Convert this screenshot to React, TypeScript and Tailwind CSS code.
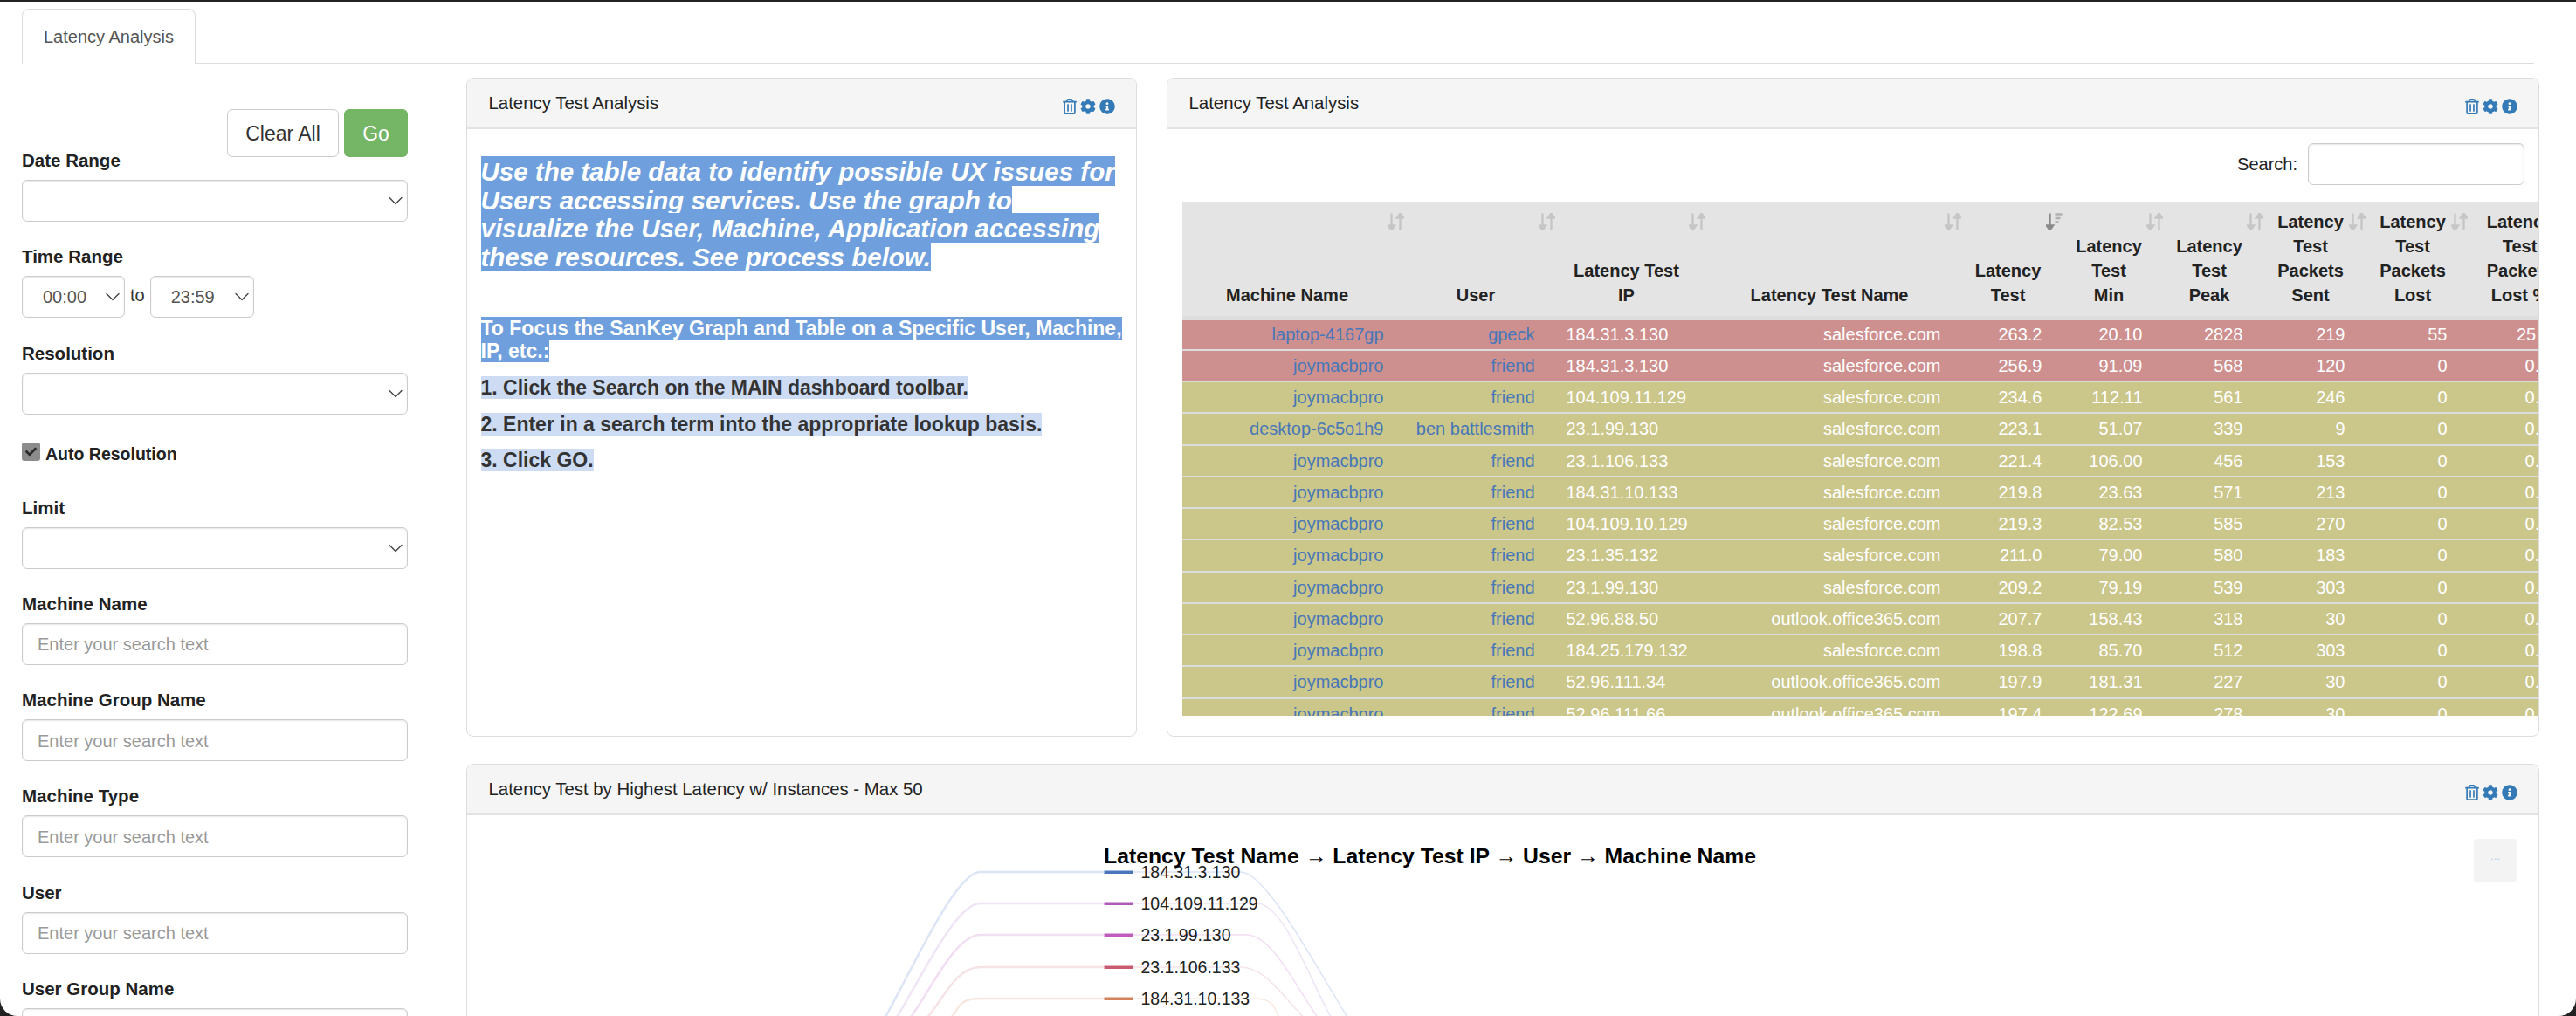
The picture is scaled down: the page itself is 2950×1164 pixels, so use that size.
import React from 'react'
import { ChevronDown } from 'lucide-react'
import { FaCheck, FaCog, FaInfoCircle, FaRegTrashAlt } from 'react-icons/fa'

const FONT = "font-['Liberation_Sans',Arial,sans-serif]"

type Row = {
  machine: string
  user: string
  ip: string
  name: string
  latency: string
  min: string
  peak: string
  sent: string
  lost: string
  lostPct: string
  red?: boolean
}

const SF = 'salesforce.com'
const OL = 'outlook.office365.com'
const JM = 'joymacbpro'

const ROWS: Row[] = [
  { machine: 'laptop-4167gp', user: 'gpeck', ip: '184.31.3.130', name: SF, latency: '263.2', min: '20.10', peak: '2828', sent: '219', lost: '55', lostPct: '25.11', red: true },
  { machine: JM, user: 'friend', ip: '184.31.3.130', name: SF, latency: '256.9', min: '91.09', peak: '568', sent: '120', lost: '0', lostPct: '0.00', red: true },
  { machine: JM, user: 'friend', ip: '104.109.11.129', name: SF, latency: '234.6', min: '112.11', peak: '561', sent: '246', lost: '0', lostPct: '0.00' },
  { machine: 'desktop-6c5o1h9', user: 'ben battlesmith', ip: '23.1.99.130', name: SF, latency: '223.1', min: '51.07', peak: '339', sent: '9', lost: '0', lostPct: '0.00' },
  { machine: JM, user: 'friend', ip: '23.1.106.133', name: SF, latency: '221.4', min: '106.00', peak: '456', sent: '153', lost: '0', lostPct: '0.00' },
  { machine: JM, user: 'friend', ip: '184.31.10.133', name: SF, latency: '219.8', min: '23.63', peak: '571', sent: '213', lost: '0', lostPct: '0.00' },
  { machine: JM, user: 'friend', ip: '104.109.10.129', name: SF, latency: '219.3', min: '82.53', peak: '585', sent: '270', lost: '0', lostPct: '0.00' },
  { machine: JM, user: 'friend', ip: '23.1.35.132', name: SF, latency: '211.0', min: '79.00', peak: '580', sent: '183', lost: '0', lostPct: '0.00' },
  { machine: JM, user: 'friend', ip: '23.1.99.130', name: SF, latency: '209.2', min: '79.19', peak: '539', sent: '303', lost: '0', lostPct: '0.00' },
  { machine: JM, user: 'friend', ip: '52.96.88.50', name: OL, latency: '207.7', min: '158.43', peak: '318', sent: '30', lost: '0', lostPct: '0.00' },
  { machine: JM, user: 'friend', ip: '184.25.179.132', name: SF, latency: '198.8', min: '85.70', peak: '512', sent: '303', lost: '0', lostPct: '0.00' },
  { machine: JM, user: 'friend', ip: '52.96.111.34', name: OL, latency: '197.9', min: '181.31', peak: '227', sent: '30', lost: '0', lostPct: '0.00' },
  { machine: JM, user: 'friend', ip: '52.96.111.66', name: OL, latency: '197.4', min: '122.69', peak: '278', sent: '30', lost: '0', lostPct: '0.00' },
]

const COLUMNS = [
  { label: 'Machine Name', width: 'w-[259px]' },
  { label: 'User', width: 'w-[173px]' },
  { label: 'Latency Test IP', width: 'w-[172px]' },
  { label: 'Latency Test Name', width: 'w-[293px]' },
  { label: 'Latency Test', width: 'w-[116px]', sorted: true },
  { label: 'Latency Test Min', width: 'w-[115px]' },
  { label: 'Latency Test Peak', width: 'w-[115px]' },
  { label: 'Latency Test Packets Sent', width: 'w-[117px]' },
  { label: 'Latency Test Packets Lost', width: 'w-[117px]' },
  { label: 'Latency Test Packets Lost %', width: 'w-[128px]' },
]

const LINKS = [
  { ip: '184.31.3.130', y: 997, left: 1014, right: 1544, bar: '#4a75bd', link: '#dce4f6', rightStart: 1421 },
  { ip: '104.109.11.129', y: 1033, left: 1027, right: 1525, bar: '#ae5cb8', link: '#efe4f5', rightStart: 1440 },
  { ip: '23.1.99.130', y: 1069, left: 1043, right: 1510, bar: '#c05cbd', link: '#f2def3', rightStart: 1428 },
  { ip: '23.1.106.133', y: 1106, left: 1062, right: 1494, bar: '#c95b70', link: '#f6e3e6', rightStart: 1421 },
  { ip: '184.31.10.133', y: 1142, left: 1089, right: 1467, bar: '#d1825a', link: '#f7e8e0', rightStart: 1435 },
]

function SortIcon({ sorted }: { sorted?: boolean }) {
  const color = sorted ? '#8a8a8a' : '#c6c6c6'
  return (
    <svg viewBox="0 0 19 20" className="absolute right-[5px] top-[13px] h-5 w-[19px]">
      <path d="M4.5 0.5v15M1 14.5l3.5 5 3.5-5z" stroke={color} strokeWidth="2.4" fill={color} />
      {sorted ? (
        <>
          <path d="M10.5 1.5h8" stroke="#b0b0b0" strokeWidth="2.6" />
          <path d="M10.5 6h6" stroke="#b0b0b0" strokeWidth="2.6" />
          <path d="M10.5 10.5h4" stroke="#b0b0b0" strokeWidth="2.6" />
        </>
      ) : (
        <path d="M14.5 19.5v-15M11 5.5l3.5-5 3.5 5z" stroke={color} strokeWidth="2.4" fill={color} />
      )}
    </svg>
  )
}

function PanelIcons() {
  return (
    <div className="mt-[6px] flex items-center gap-[4px] text-[#337ab7]">
      <FaRegTrashAlt className="h-[18px] w-[16px]" />
      <FaCog className="h-[18px] w-[18px]" />
      <FaInfoCircle className="h-[18px] w-[18px]" />
    </div>
  )
}

function Panel({ title, className = '', children }: { title: string; className?: string; children: React.ReactNode }) {
  return (
    <div className={`overflow-hidden rounded-[8px] border-[1.5px] border-[#dddddd] bg-white ${className}`}>
      <div className="flex h-[57.5px] items-center justify-between border-b-2 border-[#e2e2e2] bg-[#f5f5f5] pl-[24.5px] pr-[24px] pt-[1.5px] text-[20.4px] text-[#222]">
        <span>{title}</span>
        <PanelIcons />
      </div>
      {children}
    </div>
  )
}

function Field({ label, children }: { label: string; children: React.ReactNode }) {
  return (
    <div className="mb-[26.3px]">
      <div className="mb-[8px] h-[28px] text-[20.5px] font-bold leading-[28px] text-[#222]">{label}</div>
      {children}
    </div>
  )
}

function SelectBox({ value, className = 'w-full' }: { value?: string; className?: string }) {
  return (
    <div className={`relative h-[48px] ${className}`}>
      <select
        defaultValue={value}
        className="h-full w-full appearance-none rounded-[6px] border-[1.5px] border-[#cccccc] bg-white pl-[23px] text-[20px] text-[#555] shadow-[inset_0_1px_2px_rgba(0,0,0,0.1)]"
      >
        <option value={value}>{value}</option>
      </select>
      <ChevronDown className="pointer-events-none absolute right-0 top-[10px] h-[28px] w-[28px] text-[#444]" strokeWidth={1.2} />
    </div>
  )
}

function SearchField({ label }: { label: string }) {
  return (
    <Field label={label}>
      <input
        placeholder="Enter your search text"
        className="h-[48px] w-full rounded-[6px] border-[1.5px] border-[#cccccc] bg-white pl-[17px] pt-[2px] text-[20px] shadow-[inset_0_1px_2px_rgba(0,0,0,0.1)] placeholder:text-[#999]"
      />
    </Field>
  )
}

function Sidebar() {
  return (
    <aside className="ml-[25px] w-[442px] shrink-0 pt-[52px]">
      <div className="flex h-[55px] justify-end gap-[6px]">
        <button className="h-full w-[128px] rounded-[6px] border-[1.5px] border-[#cccccc] bg-white pt-[2px] text-[23px] text-[#333]">Clear All</button>
        <button className="h-full w-[73px] rounded-[6px] bg-[#74b566] pt-[2px] text-[23px] text-white">Go</button>
      </div>
      <div className="-mt-[10px]">
        <Field label="Date Range">
          <SelectBox />
        </Field>
        <Field label="Time Range">
          <div className="flex items-center">
            <SelectBox value="00:00" className="w-[118px]" />
            <span className="mx-[6px] -mt-[4px] text-[20px] text-[#333]">to</span>
            <SelectBox value="23:59" className="w-[119px]" />
          </div>
        </Field>
        <Field label="Resolution">
          <SelectBox />
        </Field>
        <div className="mb-[33px] mt-[32px] flex h-[28px] items-center">
          <span className="-mt-[6px] mr-[6px] flex h-[21px] w-[21px] items-center justify-center rounded-[3px] bg-[#8c8c8c]">
            <FaCheck className="h-[13px] w-[13px] text-[#2a2a2a]" />
          </span>
          <span className="text-[19.5px] font-bold text-[#222]">Auto Resolution</span>
        </div>
        <Field label="Limit">
          <SelectBox />
        </Field>
        <SearchField label="Machine Name" />
        <SearchField label="Machine Group Name" />
        <SearchField label="Machine Type" />
        <SearchField label="User" />
        <SearchField label="User Group Name" />
      </div>
    </aside>
  )
}

function GuidePanel() {
  return (
    <Panel title="Latency Test Analysis">
      <div className="whitespace-nowrap pl-[15.5px] pt-[33px]">
        <h3 className="text-[29.5px] font-bold italic leading-[32.6px] text-white">
          <span className="bg-[#6f9fdc] py-[0.5px]">
            Use the table data to identify possible UX issues for
            <br />
            Users accessing services. Use the graph to
            <br />
            visualize the User, Machine, Application accessing
            <br />
            these resources. See process below.
          </span>
        </h3>
        <h4 className="mt-[53px] text-[23px] font-bold leading-[25.7px] text-white">
          <span className="bg-[#6f9fdc]">
            To Focus the SanKey Graph and Table on a Specific User, Machine,
            <br />
            IP, etc.:
          </span>
        </h4>
        <div className="mt-[15px] flex flex-col gap-[13.5px] text-[23px] font-bold leading-[28px] text-[#333]">
          <p>
            <span className="bg-[#cddcf3]">1. Click the Search on the MAIN dashboard toolbar.</span>
          </p>
          <p>
            <span className="bg-[#cddcf3]">2. Enter in a search term into the appropriate lookup basis.</span>
          </p>
          <p>
            <span className="bg-[#cddcf3]">3. Click GO.</span>
          </p>
        </div>
      </div>
    </Panel>
  )
}

function DataTable() {
  return (
    <div className="ml-[16.5px] mt-[19px] h-[589px] overflow-hidden">
      <table className="w-[1605px] table-fixed border-collapse text-[20px]">
        <colgroup>
          {COLUMNS.map((c) => (
            <col key={c.label} className={c.width} />
          ))}
        </colgroup>
        <thead>
          <tr className="h-[134px] border-b-[5px] border-[#dedede] bg-[#e4e4e4]">
            {COLUMNS.map((c) => (
              <th key={c.label} className="relative pb-[10px] pl-[10px] pr-[28px] text-center align-bottom font-bold leading-[28px] text-[#222]">
                {c.label}
                <SortIcon sorted={c.sorted} />
              </th>
            ))}
          </tr>
        </thead>
        <tbody>
          {ROWS.map((r, i) => (
            <tr key={i} className={`h-[36.25px] border-b-[2.5px] border-[#dcdcdc] text-white ${r.red ? 'bg-[#ce8f8f]' : 'bg-[#cbc68a]'}`}>
              <td className="pr-[28px] text-right text-[#4777b8]">{r.machine}</td>
              <td className="pr-[28px] text-right text-[#4777b8]">{r.user}</td>
              <td className="pl-[8px]">{r.ip}</td>
              <td className="pr-[28px] text-right">{r.name}</td>
              <td className="pr-[28px] text-right">{r.latency}</td>
              <td className="pr-[28px] text-right">{r.min}</td>
              <td className="pr-[28px] text-right">{r.peak}</td>
              <td className="pr-[28px] text-right">{r.sent}</td>
              <td className="pr-[28px] text-right">{r.lost}</td>
              <td className="pr-[28px] text-right">{r.lostPct}</td>
            </tr>
          ))}
        </tbody>
      </table>
    </div>
  )
}

function TablePanel() {
  return (
    <Panel title="Latency Test Analysis">
      <div className="flex items-center justify-end pr-[16px] pt-[16px]">
        <span className="mr-[12px] text-[20px] text-[#222]">Search:</span>
        <input className="h-[48px] w-[248px] rounded-[6px] border-[1.5px] border-[#cccccc] bg-white shadow-[inset_0_1px_2px_rgba(0,0,0,0.1)]" />
      </div>
      <DataTable />
    </Panel>
  )
}

function SankeyChart() {
  return (
    <div className="relative">
      <svg width="2371" height="232" className="block">
        <g transform="translate(-535.5,-932)" fill="none">
          {LINKS.map((l) => (
            <g key={l.ip} stroke={l.link}>
              <path
                strokeWidth="2.5"
                d={`M1265 ${l.y}H1123C1095 ${l.y} ${l.left + (1123 - l.left) * 0.3} ${1164 - (1164 - l.y) * 0.35} ${l.left} 1164`}
              />
              <path
                strokeWidth="1.5"
                d={`M1298 ${l.y}H${l.rightStart}C${l.rightStart + 30} ${l.y} ${l.right - (l.right - l.rightStart) * 0.3} ${1164 - (1164 - l.y) * 0.35} ${l.right} 1164`}
              />
            </g>
          ))}
          {LINKS.map((l) => (
            <g key={l.ip}>
              <rect x="1265" y={l.y - 1.5} width="33" height="3.5" fill={l.bar} />
              <text x="1307" y={l.y + 7} fontSize="19.5" fill="#222">
                {l.ip}
              </text>
            </g>
          ))}
          <text x="1638" y="987" textAnchor="middle" fontSize="24.75" fontWeight="700" fill="#000">
            Latency Test Name → Latency Test IP → User → Machine Name
          </text>
        </g>
      </svg>
      <button className="absolute right-[25px] top-[27px] h-[50px] w-[49px] rounded-[4px] bg-[#f3f3f3] pb-[9px] text-[13px] text-[#b4cdec]">...</button>
    </div>
  )
}

export default function App() {
  return (
    <div className={`h-[1164px] w-[2950px] overflow-hidden bg-[#222] pt-[2px] ${FONT}`}>
      <div className="h-[1162px] overflow-hidden rounded-b-[20px] bg-white">
        <div className="ml-[25px] h-[71px] w-[2877px] border-b-[1.5px] border-[#dddddd] pt-[8px]">
          <div className="flex h-[63px] w-[199px] items-center justify-center rounded-t-[8px] border-[1.5px] border-b-0 border-[#dddddd] bg-white text-[20px] text-[#555]">
            Latency Analysis
          </div>
        </div>
        <div className="flex">
          <Sidebar />
          <main className="ml-[67px] w-[2374px] pt-[16px]">
            <div className="grid h-[754.5px] grid-cols-[768px_1572px] gap-x-[34px]">
              <GuidePanel />
              <TablePanel />
            </div>
            <Panel title="Latency Test by Highest Latency w/ Instances - Max 50" className="mt-[31.5px] h-[400px] w-[2374px]">
              <SankeyChart />
            </Panel>
          </main>
        </div>
      </div>
    </div>
  )
}
